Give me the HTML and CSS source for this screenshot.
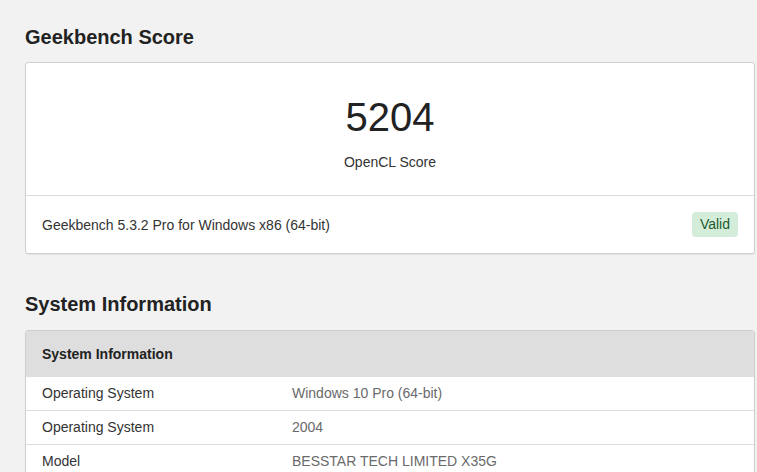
FILE: index.html
```html
<!DOCTYPE html>
<html lang="en">
<head>
<meta charset="utf-8">
<title>Geekbench Score</title>
<link rel="stylesheet" href="styles.css">
</head>
<body>
<main class="page">
  <h2 class="section-title first">Geekbench Score</h2>
  <section class="card">
    <div class="score-block">
      <div class="score">5204</div>
      <div class="score-label">OpenCL Score</div>
    </div>
    <div class="version-row">
      <span class="version">Geekbench 5.3.2 Pro for Windows x86 (64-bit)</span>
      <span class="badge">Valid</span>
    </div>
  </section>

  <h2 class="section-title second">System Information</h2>
  <section class="card table">
    <div class="table-head">System Information</div>
    <div class="row">
      <div class="cell label">Operating System</div>
      <div class="cell value">Windows 10 Pro (64-bit)</div>
    </div>
    <div class="row">
      <div class="cell label">Operating System</div>
      <div class="cell value">2004</div>
    </div>
    <div class="row">
      <div class="cell label">Model</div>
      <div class="cell value">BESSTAR TECH LIMITED X35G</div>
    </div>
  </section>
</main>
</body>
</html>
```

FILE: styles.css
```css
html, body {
  margin: 0;
  padding: 0;
  background: #f2f2f2;
  font-family: "Liberation Sans", Arial, sans-serif;
  color: #333;
  font-size: 14px;
  line-height: 20px;
}

.page {
  padding: 0 2px 0 25px;
}

.section-title {
  margin: 0;
  font-size: 20px;
  line-height: 24px;
  font-weight: bold;
  color: #222;
}

.section-title.first {
  padding-top: 25px;
  margin-bottom: 13px;
}

.section-title.second {
  margin-top: 38px;
  margin-bottom: 14px;
}

.card {
  background: #fff;
  border: 1px solid #cfcfcf;
  border-radius: 3px;
  box-shadow: 0 1px 1px rgba(0, 0, 0, 0.06);
  overflow: hidden;
}

.score-block {
  padding: 30px 16px 23px;
  text-align: center;
  border-bottom: 1px solid #dcdcdc;
}

.score {
  font-size: 40px;
  line-height: 48px;
  color: #222;
}

.score-label {
  margin-top: 11px;
  font-size: 14px;
  line-height: 20px;
  color: #333;
}

.version-row {
  display: flex;
  align-items: center;
  justify-content: space-between;
  padding: 16px 16px 16px 16px;
}

.badge {
  display: inline-block;
  height: 25px;
  line-height: 25px;
  padding: 0 8px;
  border-radius: 4px;
  background: #d4eddb;
  color: #1e5a2c;
}

.table-head {
  background: #dedede;
  font-weight: bold;
  padding: 13px 16px;
  line-height: 20px;
  color: #222;
}

.row {
  display: grid;
  grid-template-columns: 250px 1fr;
  border-top: 1px solid #dddddd;
}

.table-head + .row {
  border-top: none;
}

.cell {
  padding: 6px 16px 7px;
  line-height: 20px;
}

.label {
  color: #333;
}

.value {
  color: #6a6a6a;
}
```
